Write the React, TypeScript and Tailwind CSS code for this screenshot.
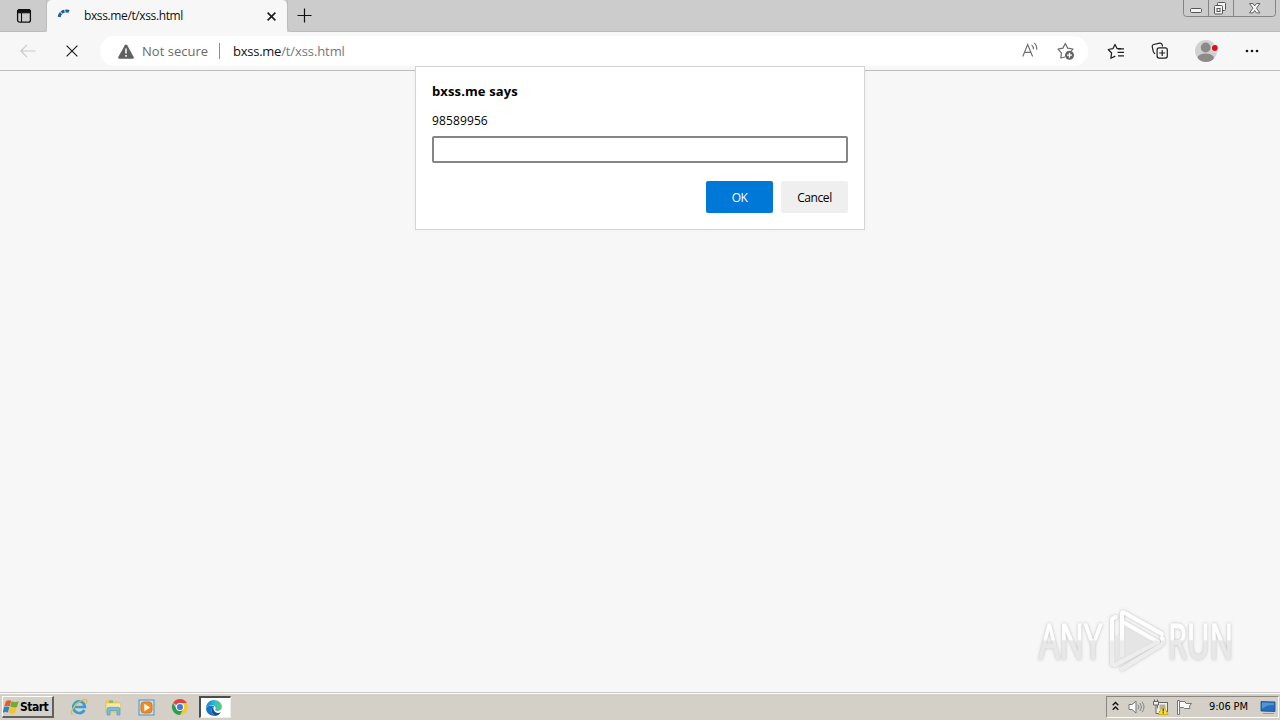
import React from "react";

function TabActionsIcon() {
  return (
    <svg width="16" height="16" viewBox="0 0 16 16" fill="none" stroke="#111">
      <rect x="1.6" y="1.6" width="12.8" height="12.6" rx="2" strokeWidth="1.3" />
      <path d="M1.5 3.5Q1.5 1.5 3.5 1.5H12.5Q14.5 1.5 14.5 3.5V4.8H1.5Z" fill="#111" />
      <path d="M5.5 5V14" strokeWidth="1.1" />
    </svg>
  );
}

function CloseIcon({ size, stroke }: { size: number; stroke: number }) {
  return (
    <svg width={size} height={size} viewBox={`0 0 ${size} ${size}`} stroke="#1b1b1b" strokeWidth={stroke}>
      <path d={`M.6 .6L${size - 0.6} ${size - 0.6}M${size - 0.6} .6L.6 ${size - 0.6}`} />
    </svg>
  );
}

function WindowControls() {
  return (
    <svg width="94" height="18" viewBox="0 0 94 18" fill="none" className="mr-[3px]">
      <path d="M.5 0V13.5Q.5 16.5 3.5 16.5H89.500Q92.500 16.5 92.500 13.5V0" stroke="#858585" />
      <path d="M25.500 0V16M50.500 0V16" stroke="#858585" />
      <rect x="7.500" y="8.500" width="11" height="4" rx="1.200" fill="#f4f4f4" stroke="#555" />
      <rect x="34.500" y="2.500" width="8" height="8" rx="1" fill="#f4f4f4" stroke="#555" />
      <rect x="31.500" y="5.500" width="8" height="8.500" rx="1" fill="#f4f4f4" stroke="#555" />
      <rect x="34" y="8.500" width="3" height="3" stroke="#555" />
      <path d="M66.500 3.500H70L71.700 5.900L73.400 3.500H76.900L73.500 8.200L76.900 12.900H73.400L71.700 10.500L70 12.900H66.500L69.900 8.200Z" fill="#f4f4f4" stroke="#555" strokeWidth=".9" />
    </svg>
  );
}

function TitleBar() {
  return (
    <div className="flex h-8 shrink-0 bg-[#cccccc]">
      <div className="flex w-[47px] items-center justify-center rounded-br-[5px] border-r border-b border-[#bcbcbc] pl-0.5">
        <TabActionsIcon />
      </div>
      <div className="flex w-[240px] items-center rounded-t-[5px] bg-[#f7f7f7] pr-[11px] pl-[10px]">
        <svg width="14" height="14" viewBox="0 0 14 14" fill="none" stroke="#1d5f9c" strokeWidth="3" className="shrink-0">
          <path d="M2.200 8A6 6 0 0 1 4 4.200" />
          <path d="M4.500 3.700A6 6 0 0 1 7.500 2.300M8.400 2.200A6 6 0 0 1 12 2.400" />
        </svg>
        <span className="ml-[13px] w-[183px] shrink-0 text-[12px] leading-4 tracking-[-0.380px] text-[#111]">bxss.me/t/xss.html</span>
        <span className="mt-px -mr-px shrink-0">
          <CloseIcon size={9} stroke={1.6} />
        </span>
      </div>
      <div className="flex flex-1 items-start justify-between rounded-bl-[5px] border-b border-l border-[#bcbcbc]">
        <svg width="15" height="15" viewBox="0 0 15 15" stroke="#111" strokeWidth="1.200" className="mt-2 ml-[9px]">
          <path d="M7.500 .5V14.500M.5 7.500H14.500" />
        </svg>
        <WindowControls />
      </div>
    </div>
  );
}

function Toolbar() {
  return (
    <div className="flex h-[39px] shrink-0 items-center border-b border-[#bdbdbd] bg-[#f7f7f7]">
      <svg width="16" height="14" viewBox="0 0 16 14" fill="none" stroke="#c9c9c9" strokeWidth="1.200" className="ml-5">
        <path d="M15.500 7H1M7 .8L.9 7L7 13.200" />
      </svg>
      <span className="ml-[30px]">
        <CloseIcon size={12} stroke={1.15} />
      </span>
      <div className="ml-[22px] flex h-[30px] w-[988px] items-center rounded-full bg-white pr-[13px] pl-[18px]">
        <svg width="16" height="15" viewBox="0 0 16 15">
          <path d="M8 .4Q8.700 .4 9.200 1.300L15.700 13Q16.200 14.600 14.700 14.700H1.300Q-.2 14.600 .3 13L6.800 1.300Q7.300 .4 8 .4Z" fill="#606060" />
          <path d="M8 4.600V9.600M8 11V12.800" stroke="#fff" strokeWidth="1.500" />
        </svg>
        <span className="ml-2 w-[68px] text-[13px] leading-4 tracking-[0.020px] whitespace-nowrap text-[#6a6a6a]">Not secure</span>
        <span className="ml-[9px] h-4 w-px bg-[#8c8c8c]" />
        <span className="ml-[13px] text-[13px] leading-4 text-[#777]">
          <span className="tracking-[-0.250px] text-[#111]">bxss.me</span>
          <span className="tracking-[-0.100px]">/t/xss.html</span>
        </span>
        <svg width="17" height="16" viewBox="0 0 17 16" fill="none" stroke="#6f6f6f" strokeWidth="1.150" className="mr-[18px] ml-auto -translate-y-px">
          <path d="M.8 14.500L5.700 2.500L10.600 14.500M2.600 10.300H8.900" />
          <path d="M9.600 2.900Q11.600 4.500 11.500 7.300M12.200 .9Q15.200 3.700 14.700 7.800" />
        </svg>
        <svg width="18" height="18" viewBox="0 0 18 18" fill="none" stroke="#6b6b6b" strokeWidth="1.200">
          <path d="M8 15L3.800 16L4.400 10.900L1 7.100L5.900 6.100L8.300 1.500L10.700 6.100L16 7L14.200 8.800" strokeLinejoin="round" />
          <circle cx="12.500" cy="13.200" r="4.500" fill="#636363" stroke="none" />
          <path d="M12.500 10.700V15.700M10 13.200H15" stroke="#fff" strokeWidth="1.300" />
        </svg>
      </div>
      <svg width="18" height="17" viewBox="0 0 18 17" fill="none" stroke="#1f1f1f" strokeWidth="1.250" className="ml-[19px]">
        <path d="M14 5.700H10.200L8 1.500L5.900 5.700L1.200 6.500L4.600 10L3.900 15.300L8.300 13.100" strokeLinejoin="round" />
        <path d="M11 5.800H17M10.500 9.300H17M11 12.800H17" />
      </svg>
      <svg width="18" height="18" viewBox="0 0 18 18" fill="none" stroke="#1f1f1f" strokeWidth="1.200" className="ml-[26px]">
        <path d="M4.200 11.600Q2.700 11.200 2.300 9.700L1.200 4.700Q1 3 2.600 2.500L8.800 1.200Q10.500 1 11.100 2.500L11.500 4.500" />
        <rect x="6.100" y="5.900" width="10.200" height="10.200" rx="2" />
        <path d="M11.200 8V14M8.200 11H14.200" />
      </svg>
      <svg width="24" height="24" viewBox="0 0 24 24" className="ml-[25px]">
        <clipPath id="avatar"><circle cx="12" cy="12" r="11" /></clipPath>
        <circle cx="12" cy="12" r="11" fill="#d1d1cf" />
        <g clipPath="url(#avatar)" fill="#8b8a89">
          <circle cx="11.700" cy="8.500" r="4.900" />
          <ellipse cx="11.700" cy="18.900" rx="8.200" ry="4.300" />
        </g>
        <circle cx="20.800" cy="9" r="3.700" fill="#ebe6e4" />
        <circle cx="20.800" cy="9" r="2.900" fill="#d51322" />
      </svg>
      <svg width="14" height="4" viewBox="0 0 14 4" fill="#151515" className="ml-[27px]">
        <circle cx="2" cy="2" r="1.300" /><circle cx="7" cy="2" r="1.300" /><circle cx="12" cy="2" r="1.300" />
      </svg>
    </div>
  );
}

function PromptDialog() {
  return (
    <div className="absolute top-[66px] left-[415px] flex h-[164px] w-[450px] flex-col border border-[#d4d4d4] bg-white px-4 text-black shadow-[0_0_5px_rgba(0,0,0,0.03)]">
      <h1 className="mt-4 text-[13px] leading-4 font-bold tracking-[0.120px]">bxss.me says</h1>
      <p className="mt-[14px] text-[12px] leading-4 tracking-[0.120px]">98589956</p>
      <input className="mt-[7px] h-[27px] w-full rounded-[2px] border-2 border-[#858585] bg-white outline-none" />
      <div className="mt-[18px] flex justify-end gap-2 text-[12px]">
        <button className="h-8 w-[67px] rounded-[2px] bg-[#0078d7] pt-px tracking-[-0.500px] text-white">OK</button>
        <button className="h-8 w-[67px] rounded-[2px] bg-[#efefef] pt-px tracking-[-0.400px]">Cancel</button>
      </div>
    </div>
  );
}

function Watermark() {
  return (
    <svg width="206" height="72" viewBox="0 0 206 72" className="absolute top-[604px] left-[1032px]">
      <defs>
        <linearGradient id="fade" x1="0" y1="0" x2="0" y2="72" gradientUnits="userSpaceOnUse">
          <stop offset=".2" stopColor="#fff" />
          <stop offset=".49" stopColor="#fdfdfd" />
          <stop offset=".52" stopColor="#ececec" />
          <stop offset="1" stopColor="#eeeeee" />
        </linearGradient>
        <linearGradient id="textFade" x1="0" y1="-36" x2="0" y2="0" gradientUnits="userSpaceOnUse">
          <stop offset="0" stopColor="#fff" />
          <stop offset=".46" stopColor="#fdfdfd" />
          <stop offset=".5" stopColor="#e9e9e9" />
          <stop offset="1" stopColor="#e7e7e7" />
        </linearGradient>
        <filter id="glow" x="-10%" y="-20%" width="120%" height="140%">
          <feDropShadow dx="0" dy="0" stdDeviation="1.700" floodColor="#777" floodOpacity=".5" />
        </filter>
      </defs>
      <g filter="url(#glow)">
        <g fill="url(#textFade)" stroke="url(#textFade)" strokeWidth="1.200" fontFamily="'Open Sans', sans-serif" fontSize="50">
          <text transform="translate(7 55) scale(.63 1)" textLength="100" lengthAdjust="spacingAndGlyphs">ANY</text>
          <text transform="translate(136 55) scale(.65 1)" textLength="100" lengthAdjust="spacingAndGlyphs">RUN</text>
        </g>
        <path d="M90 18L128 38L88 60H80V36L90 30Z" fill="#ededed" opacity=".55" />
        <g fill="none" stroke="url(#fade)" strokeWidth="4" strokeLinecap="round" strokeLinejoin="round">
          <path d="M83.500 13L80 15V60L83 61L126 38" />
          <path d="M126 38L91 18" />
          <path d="M90 51V10Q90 7 93 9L130 30" />
          <path d="M90 65L129 41Q133 38 130 34" />
        </g>
      </g>
    </svg>
  );
}

function StartFlag() {
  return (
    <svg width="16" height="16" viewBox="0 0 16 16">
      <path d="M3 2.200Q5.200 .3 8.200 1.800L6.700 7.200Q4 6 1.200 7.600Z" fill="#e65c24" />
      <path d="M8.600 2.200Q12 3.700 15.700 2.200L14 7.900Q10.800 9.200 7.200 7.600Z" fill="#70ad32" />
      <path d="M1 8.200Q4 6.900 6.400 8L4.900 13.600Q2.400 12.400 -.3 13.900Z" fill="#347fcb" />
      <path d="M6.900 8.400Q10.200 9.900 13.700 8.500L12.100 14Q9 15.400 5.400 13.900Z" fill="#f8c42c" />
    </svg>
  );
}

function ExplorerBrowserIcon() {
  return (
    <svg width="18" height="18" viewBox="0 0 18 18" fill="none">
      <path d="M14.500 12Q12.500 15.300 9 15A5.800 5.800 0 1 1 14.900 9H5" stroke="#329fd9" strokeWidth="2.700" />
      <path d="M4 8.500Q5 5 9 4.400" stroke="#83d7f7" strokeWidth="1" />
      <path d="M2.500 16.300Q.3 15.700 2.500 11.300Q6 5.500 12 2.200Q16.500 .5 16.800 2.700Q17 4 15.800 5.700" stroke="#e6b92d" strokeWidth="1.300" />
    </svg>
  );
}

function FolderIcon() {
  return (
    <svg width="18" height="18" viewBox="0 0 18 18">
      <path d="M1 3.500L2 2H7L8 3H14.500L16 5V15H1Z" fill="#e8c96b" />
      <path d="M5 2.500H9V6H5Z" fill="#7fb96a" />
      <path d="M2 5H16.500V13H2Z" fill="#fae9a5" stroke="#d9bd67" strokeWidth=".6" />
      <path d="M3 17V11Q3 9.300 5 9.300H14Q16 9.300 16 11V17H13V12.500H6V17Z" fill="#72bde5" stroke="#4b94c4" strokeWidth=".6" />
    </svg>
  );
}

function MediaIcon() {
  return (
    <svg width="17" height="17" viewBox="0 0 17 17">
      <rect x="1" y="1" width="15" height="15" fill="#c1e2f4" stroke="#4a93c2" />
      <rect x="3" y="3" width="11" height="11" rx="3" fill="#f38b1c" stroke="#df7515" />
      <path d="M6.300 4.800L12.200 8.500L6.300 12.200Z" fill="#fff" />
    </svg>
  );
}

function ChromeIcon() {
  return (
    <svg width="18" height="18" viewBox="0 0 18 18">
      <path d="M9 9L2 5A8 8 0 0 1 15.900 5H9Z" fill="#df4638" />
      <path d="M9 9L12.500 11L9 17A8 8 0 0 0 15.900 5H9Z" fill="#f8c92c" />
      <path d="M9 9L5.600 11L2 5A8 8 0 0 0 9 17L12.500 11Z" fill="#329c4d" />
      <circle cx="9" cy="9" r="4" fill="#fff" />
      <circle cx="9" cy="9" r="3.100" fill="#3d7edb" />
    </svg>
  );
}

function EdgeIcon() {
  return (
    <svg width="18" height="18" viewBox="0 0 18 18">
      <defs>
        <linearGradient id="edgeTop" x1="1" y1="8" x2="17" y2="8" gradientUnits="userSpaceOnUse">
          <stop stopColor="#167fc8" /><stop offset=".55" stopColor="#2fbbd6" /><stop offset="1" stopColor="#65d05a" />
        </linearGradient>
      </defs>
      <path d="M1.100 9C1.300 4 4.700 1 9 1C13.500 1 17 4.100 17 7.800C17 10.500 14.900 12 12.600 12C10.700 12 9.800 11.300 10.200 10.600C11.200 9.300 10.600 6.500 7.300 6.300C4 6 1.700 7.700 1.100 9Z" fill="url(#edgeTop)" />
      <path d="M1 9Q2.500 6.300 6 6.400Q9 6.600 9.700 8.100Q6.300 8.400 6.400 11.500Q6.600 15.300 10.500 16.900Q5.700 17.500 2.800 14.300Q1 12 1 9Z" fill="#1875c5" />
      <path d="M8.300 8.300Q6.200 9 6.400 11.500Q6.700 15.400 10.500 16.900Q14 16.300 16 13.200Q12.800 14.700 10.100 12.900Q8.100 11.400 8.300 8.300Z" fill="#124f93" />
    </svg>
  );
}

function TrayIcons() {
  return (
    <>
      <svg width="7" height="10" viewBox="0 0 7 10" fill="none" stroke="#111" strokeWidth="1.400" className="ml-[5px] -translate-y-px">
        <path d="M.7 4.300L3.500 1.500L6.300 4.300M.7 8.800L3.500 6L6.300 8.800" />
      </svg>
      <svg width="17" height="16" viewBox="0 0 17 16" fill="none" stroke="#777" className="ml-[9px]">
        <path d="M1 5.500H4L8 2V14L4 10.500H1Z" fill="#fafafa" />
        <path d="M10 5.700Q11.800 8 10 10.300M12 4Q15 8 12 12M14 2.700Q18 8 14 13.300" stroke="#858585" />
      </svg>
      <svg width="17" height="17" viewBox="0 0 17 17" className="ml-[7px]">
        <rect x="5.500" y="3.500" width="10" height="9" fill="#f0f0f0" stroke="#666" />
        <rect x="7.500" y="5.500" width="6" height="5" fill="#b2b2b2" />
        <path d="M1.500 2.500H6.500V6H1.500ZM2.500 .5V2.500M5.500 .5V2.500M4 6V14.500H8" fill="#f0f0f0" stroke="#666" />
        <path d="M11.200 6.700L16.200 15.500H6.200Z" fill="#ffdf24" stroke="#c59c12" strokeWidth=".7" />
        <path d="M11.200 9.200V12.500M11.200 13.300V14.500" stroke="#333" strokeWidth="1.200" />
      </svg>
      <svg width="17" height="17" viewBox="0 0 17 17" fill="#fafafa" stroke="#777" className="ml-[7px]">
        <path d="M1.500 1.500H3.500V15.500H1.500Z" />
        <path d="M3.500 2.500H9L10 4.500H15.500L13.500 7L14 9.500H8.500L7.500 8.500H3.500Z" />
      </svg>
    </>
  );
}

function Taskbar() {
  return (
    <div className="flex h-[27px] shrink-0 border-t border-white bg-[#d4d0c8] pt-[2px] pb-px">
      <button className="ml-0.5 flex h-[22px] w-[52px] items-center border-t border-r-2 border-b-2 border-l border-t-white border-r-[#606060] border-b-[#606060] border-l-white font-['DejaVu_Sans_Condensed','DejaVu_Sans',sans-serif] text-[12px] font-bold tracking-[-0.500px] text-black">
        <StartFlag />
        <span className="ml-px">Start</span>
      </button>
      <div className="ml-4 flex h-[22px] items-center gap-4">
        <ExplorerBrowserIcon />
        <FolderIcon />
        <MediaIcon />
        <ChromeIcon />
      </div>
      <div className="ml-[10px] flex h-[22px] w-8 items-center justify-center border-t-2 border-r border-b border-l-2 border-t-[#4d4d4d] border-r-[#eee] border-b-[#eee] border-l-[#4d4d4d] bg-white pr-[3px]">
        <EdgeIcon />
      </div>
      <div className="mr-px ml-auto flex h-[22px] w-[173px] items-center border border-t-[#8a8782] border-r-white border-b-white border-l-[#8a8782]">
        <TrayIcons />
        <span className="ml-4 w-[42px] font-['DejaVu_Sans_Condensed','DejaVu_Sans',sans-serif] text-[11px] leading-4 tracking-[-0.150px] whitespace-nowrap text-black">9:06 PM</span>
        <svg width="16" height="15" viewBox="0 0 16 15" className="ml-[9px] shrink-0">
          <path d="M1 1.500L15 2V11.500L1 11Z" fill="#266ebd" stroke="#174d88" strokeWidth=".8" />
          <path d="M2 2.500L14 3V5Q7 4.500 2 9Z" fill="#5195d7" />
          <path d="M3 13.500H14" stroke="#929da9" />
        </svg>
      </div>
    </div>
  );
}

export default function App() {
  return (
    <div className="relative flex h-screen w-screen flex-col overflow-hidden bg-[#f7f7f7] font-['Open_Sans','Noto_Sans',sans-serif]">
      <TitleBar />
      <Toolbar />
      <main className="flex-1 border-b border-[#c7c5c1] bg-[#f7f7f7]" />
      <Taskbar />
      <PromptDialog />
      <Watermark />
    </div>
  );
}
